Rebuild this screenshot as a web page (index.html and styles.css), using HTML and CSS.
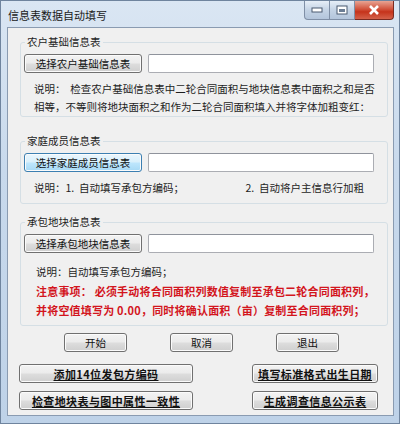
FILE: index.html
```html
<!DOCTYPE html>
<html lang="zh-CN">
<head>
    <meta charset="UTF-8">
    <title>信息表数据自动填写</title>
    <link rel="stylesheet" href="styles.css">
</head>
<body>
    <div class="window">
        <div class="titlebar">
            <span class="title">信息表数据自动填写</span>
            <div class="caption-buttons">
                <span class="cap min"><svg width="12" height="6" viewBox="0 0 12 6"><rect x="1" y="1" width="10" height="4" fill="#fff" stroke="#4a5a70"/></svg></span>
                <span class="cap max"><svg width="12" height="10" viewBox="0 0 12 10"><rect x="1" y="1" width="10" height="8" fill="#fff" stroke="#4a5a70"/><rect x="3" y="4" width="6" height="3" fill="#6b7d94"/></svg></span>
                <span class="cap close"><svg width="12" height="10" viewBox="0 0 12 10"><path d="M2 1 L10 9 M10 1 L2 9" stroke="#fff" stroke-width="2.6"/></svg></span>
            </div>
        </div>
        <div class="client">
            <fieldset class="group g1">
                <legend>农户基础信息表</legend>
                <div class="pick">
                    <button class="btn">选择农户基础信息表</button>
                    <input class="field" type="text">
                </div>
                <p class="note">说明：&nbsp;&nbsp;检查农户基础信息表中二轮合同面积与地块信息表中面积之和是否<br>相等，不等则将地块面积之和作为二轮合同面积填入并将字体加粗变红：</p>
            </fieldset>

            <fieldset class="group g2">
                <legend>家庭成员信息表</legend>
                <div class="pick">
                    <button class="btn focus">选择家庭成员信息表</button>
                    <input class="field" type="text">
                </div>
                <p class="note two"><span>说明：1.&nbsp;&nbsp;自动填写承包方编码；</span><span>2.&nbsp;&nbsp;自动将户主信息行加粗</span></p>
            </fieldset>

            <fieldset class="group g3">
                <legend>承包地块信息表</legend>
                <div class="pick">
                    <button class="btn">选择承包地块信息表</button>
                    <input class="field" type="text">
                </div>
                <p class="note single">说明：自动填写承包方编码；</p>
                <p class="warn">注意事项：&nbsp;必须手动将合同面积列数值复制至承包二轮合同面积列，<br>并将空值填写为 0.00，同时将确认面积（亩）复制至合同面积列；</p>
            </fieldset>

            <div class="actions">
                <button class="btn small">开始</button>
                <button class="btn small">取消</button>
                <button class="btn small">退出</button>
            </div>

            <div class="tools">
                <button class="btn tool">添加14位发包方编码</button>
                <button class="btn tool narrow">填写标准格式出生日期</button>
                <button class="btn tool">检查地块表与图中属性一致性</button>
                <button class="btn tool narrow">生成调查信息公示表</button>
            </div>
        </div>
    </div>
</body>
</html>
```

FILE: styles.css
```css
body {
    margin: 0;
    font-family: "Noto Sans CJK SC", "Liberation Sans", sans-serif;
    font-size: 10.5px;
    color: #1e1e1e;
    background: #fff;
}
.window {
    width: 400px;
    height: 424px;
    box-sizing: border-box;
    background: linear-gradient(180deg, #dae6f3 0%, #c8d9ec 40%, #bed2e8 100%);
    border: 1px solid #6f849e;
    display: flex;
    flex-direction: column;
}
.titlebar {
    height: 26px;
    display: flex;
    justify-content: space-between;
    align-items: flex-start;
    padding-left: 7px;
}
.title {
    margin-top: 6px;
    font-size: 11px;
    color: #1a1a1a;
}
.caption-buttons {
    display: flex;
    margin-right: 5px;
}
.cap {
    height: 18px;
    display: flex;
    align-items: center;
    justify-content: center;
    border: 1px solid #7f8fa6;
    border-top: none;
    background: linear-gradient(180deg, #e6eef7, #c4d3e5 50%, #b3c5db);
}
.cap.min {
    width: 24px;
    border-radius: 0 0 0 4px;
}
.cap.max {
    width: 24px;
    border-left: none;
}
.cap.close {
    width: 38px;
    border-left: none;
    border-color: #7a2a20;
    border-radius: 0 0 4px 0;
    background: linear-gradient(180deg, #e8a493, #d2533c 45%, #c5331b 60%, #d4614a);
}
.client {
    flex: 1;
    margin: 0 5px 7px 6px;
    background: #f0f0f0;
    border: 1px solid #8a9bb1;
}
.group {
    margin: 0 5px 0 12px;
    padding: 5px 0 0 3px;
    border: 1px solid #d5dfe5;
    border-radius: 3px;
    min-width: 0;
}
.group legend {
    padding: 0 2px;
    margin-left: 1px;
    line-height: 14px;
}
.g1 { margin-top: 7px; padding-bottom: 0; }
.g2 { margin-top: 17px; padding-bottom: 6px; }
.g3 { margin-top: 11px; padding-bottom: 5px; }
.pick {
    display: flex;
    gap: 6px;
    align-items: center;
}
.btn {
    font-family: inherit;
    font-size: 10.5px;
    color: #111;
    height: 19px;
    padding: 0;
    border: 1px solid #707070;
    border-radius: 3px;
    background: linear-gradient(180deg, #f3f3f3 0%, #ebebeb 48%, #dddddd 52%, #cfcfcf 100%);
    box-shadow: inset 0 0 0 1px #fbfbfb;
}
.btn.focus {
    border-color: #3c7fb1;
    background: linear-gradient(180deg, #eaf6fd 0%, #d9f0fc 48%, #bee6fd 52%, #a7d9f5 100%);
}
.pick .btn {
    width: 118px;
}
.field {
    width: 226px;
    height: 19px;
    box-sizing: border-box;
    border: 1px solid #abadb3;
    border-top-color: #8f939c;
    border-radius: 2px;
    background: #fff;
}
.note {
    margin: 7px 0 0 10px;
    line-height: 18px;
}
.note.two {
    display: flex;
    justify-content: space-between;
    width: 330px;
}
.note.single {
    margin-left: 12px;
    margin-top: 10px;
}
.warn {
    margin: 1px 0 0 12px;
    line-height: 19px;
    color: #d3151d;
    font-weight: bold;
    font-size: 11px;
    letter-spacing: 0.2px;
}
.actions {
    display: flex;
    gap: 43px;
    margin: 7px 0 0 56px;
}
.btn.small {
    width: 63px;
}
.tools {
    display: grid;
    grid-template-columns: 174px 126px;
    column-gap: 59px;
    row-gap: 8px;
    margin: 12px 0 0 11px;
}
.btn.tool {
    font-weight: bold;
    font-size: 11px;
    letter-spacing: 0.4px;
    text-decoration: underline;
}
```
